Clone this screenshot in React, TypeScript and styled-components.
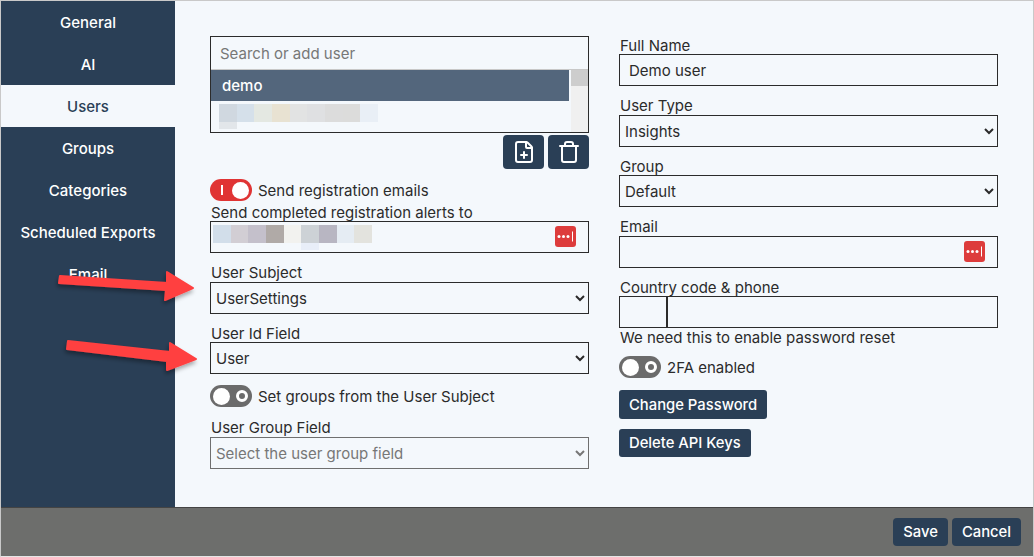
import React from "react";
import styled, { createGlobalStyle } from "styled-components";
import { FilePlus, Trash } from "lucide-react";

const GlobalStyle = createGlobalStyle`
  html, body { margin: 0; padding: 0; background: #f4f8fc; }
  * { box-sizing: border-box; }
  body { font-family: Inter, "Liberation Sans", sans-serif; font-size: 15px; color: #2b2b2b; }
`;

const navy = "#2a3f56";

const Page = styled.div`
  position: relative;
  width: 1034px;
  height: 557px;
  display: flex;
  flex-direction: column;
  border: 1px solid #c9c9c9;
  border-bottom-color: #e6e6e6;
  overflow: hidden;
`;

const Body = styled.div`
  flex: 1;
  display: flex;
  min-height: 0;
`;

const Sidebar = styled.nav`
  width: 174px;
  background: ${navy};
`;

const NavItem = styled.div<{ $active?: boolean }>`
  height: 42px;
  display: flex;
  align-items: center;
  justify-content: center;
  font-weight: 500;
  color: ${p => (p.$active ? "#2a3f56" : "#fff")};
  background: ${p => (p.$active ? "#f4f8fc" : "transparent")};
`;

const Main = styled.main`
  flex: 1;
  display: flex;
  gap: 30px;
  padding: 35px 0 0 35px;
  background: #f4f8fc;
`;

const Column = styled.div`
  width: 379px;
  display: flex;
  flex-direction: column;
`;

const Field = styled.div<{ $top?: number }>`
  margin-top: ${p => p.$top ?? 0}px;
  display: flex;
  flex-direction: column;
`;

const Label = styled.label<{ $gap?: number }>`
  height: 18px;
  margin-bottom: ${p => p.$gap ?? 0}px;
  padding-left: 1px;
  line-height: 20px;
  white-space: nowrap;
`;

const ListBox = styled.div`
  height: 97px;
  border: 1px solid #2b2b2b;
  display: flex;
  flex-direction: column;
`;

const Search = styled.input`
  height: 33px;
  flex: none;
  border: 0;
  border-bottom: 1px solid #c8c8c8;
  outline: 0;
  background: #f4f8fc;
  padding: 0 9px;
  font: inherit;
  &::placeholder { color: #777; opacity: 1; }
`;

const ListArea = styled.div`
  flex: 1;
  display: flex;
  min-height: 0;
`;

const ListRows = styled.div`
  flex: 1;
`;

const ListRow = styled.div`
  height: 31px;
  line-height: 31px;
  padding-left: 11px;
  background: #53667c;
  color: #fff;
  font-weight: 500;
`;

const ScrollTrack = styled.div`
  width: 17px;
  margin-left: 2px;
  background: #f0f0f0;
`;

const ScrollThumb = styled.div`
  height: 16px;
  background: #cdcdcd;
`;

const Mosaic = styled.div<{ $left: number; $top: number }>`
  position: absolute;
  left: ${p => p.$left}px;
  top: ${p => p.$top}px;
  display: grid;
  grid-auto-flow: column;
  grid-template-rows: 18px 7px;
  grid-auto-columns: 17.67px;
`;

const Cell = styled.div<{ $c?: string; $row?: number }>`
  grid-row: ${p => p.$row ?? 1};
  background: ${p => p.$c ?? "transparent"};
`;

const ButtonRow = styled.div`
  margin-top: 2px;
  display: flex;
  justify-content: flex-end;
  gap: 4px;
`;

const IconButton = styled.button`
  width: 41px;
  height: 34px;
  display: flex;
  align-items: center;
  justify-content: center;
  padding: 0;
  border: 0;
  border-radius: 4px;
  background: ${navy};
  color: #fff;
`;

const ToggleRow = styled.div<{ $top: number }>`
  margin-top: ${p => p.$top}px;
  height: 22px;
  display: flex;
  align-items: center;
  gap: 6px;
`;

const ToggleText = styled.span`
  padding-top: 1px;
`;

const Track = styled.div<{ $on?: boolean }>`
  width: 42px;
  height: 22px;
  border-radius: 11px;
  flex: none;
  display: flex;
  align-items: center;
  justify-content: space-between;
  flex-direction: ${p => (p.$on ? "row" : "row-reverse")};
  padding: 0 3px 0 ${p => (p.$on ? 11 : 3)}px;
  background: ${p => (p.$on ? "#e03434" : "#6b6b6b")};
`;

const Knob = styled.div`
  width: 17px;
  height: 17px;
  border-radius: 50%;
  background: #fff;
`;

const OnMark = styled.div`
  width: 2px;
  height: 10px;
  background: #fff;
`;

const OffMark = styled.div`
  width: 12px;
  height: 12px;
  margin-right: 1px;
  border-radius: 50%;
  border: 3px solid #fff;
  background: #6b6b6b;
`;

const InputWrap = styled.div`
  position: relative;
  display: flex;
`;

const TextInput = styled.input`
  width: 100%;
  height: 32px;
  border: 1px solid #2b2b2b;
  border-radius: 0;
  outline: 0;
  background: #f4f8fc;
  padding: 0 9px;
  font: inherit;
  color: #2b2b2b;
`;

const CodeInput = styled(TextInput)`
  width: 49px;
  flex: none;
  border-right-width: 2px;
`;

const PhoneInput = styled(TextInput)`
  flex: 1;
  border-left: 0;
`;

const Select = styled.select<{ $muted?: boolean }>`
  width: 100%;
  height: 32px;
  border: 1px solid ${p => (p.$muted ? "#6f6f6f" : "#2b2b2b")};
  border-radius: 0;
  outline: 0;
  background: #f4f8fc;
  padding: 0 0 0 1px;
  font: inherit;
  color: ${p => (p.$muted ? "#777" : "#2b2b2b")};
`;

const KeyBadge = styled.svg`
  position: absolute;
  right: 13px;
  top: 5px;
`;

const Hint = styled.div`
  margin-top: 1px;
  padding-left: 1px;
  height: 18px;
  line-height: 18px;
`;

const ActionButton = styled.button<{ $top: number; $h: number }>`
  align-self: flex-start;
  margin-top: ${p => p.$top}px;
  height: ${p => p.$h}px;
  padding: 0 10px;
  border: 0;
  border-radius: 3px;
  background: ${navy};
  color: #fff;
  font: inherit;
  font-size: 14.8px;
  font-weight: 500;
`;

const Footer = styled.footer`
  height: 49px;
  flex: none;
  display: flex;
  align-items: center;
  justify-content: flex-end;
  gap: 4px;
  padding-right: 12px;
  padding-bottom: 1px;
  background: #6d6e6c;
  border-top: 1px solid #444;
`;

const FooterButton = styled.button`
  height: 28px;
  padding: 0 10px;
  border: 0;
  border-radius: 4px;
  background: ${navy};
  color: #fff;
  font: inherit;
  font-size: 14.8px;
  font-weight: 500;
`;

const Arrows = styled.svg`
  position: absolute;
  left: 0;
  top: 0;
  pointer-events: none;
`;

const userCells = ["#d0d8e0", "#d5e0ea", "#e4e8e2", "#e8e2d2", "#e2e3e3", "#dfe0e2", "#dcdcdc", "#dcdcdb", "#e9eff6"];
const alertCells = ["#d2deea", "#d2ced4", "#c4c0cb", "#b0aaa7", "#f2f2ef", "#cdd2d6", "#b8b6c2", "#e5ecf3", "#e3e3de"];

const Toggle = ({ on }: { on?: boolean }) => (
  <Track $on={on}>
    {on ? <OnMark /> : <OffMark />}
    <Knob />
  </Track>
);

const Key = () => (
  <KeyBadge width="21" height="21" viewBox="0 0 21 21">
    <rect width="21" height="21" rx="3" fill="#dd3c3c" />
    <circle cx="4" cy="10.5" r="1.5" fill="#fff" />
    <circle cx="8.5" cy="10.5" r="1.5" fill="#fff" />
    <circle cx="13" cy="10.5" r="1.5" fill="#fff" />
    <rect x="17" y="5.5" width="1" height="10" fill="#fff" />
  </KeyBadge>
);

const Arrow = ({ points }: { points: string }) => (
  <polygon points={points} fill="#ff4040" stroke="#ff4040" strokeWidth="2" strokeLinejoin="round" filter="url(#arrowShadow)" />
);

export default function App(): JSX.Element {
  return (
    <Page>
      <GlobalStyle />
      <Body>
        <Sidebar>
          <NavItem>General</NavItem>
          <NavItem>AI</NavItem>
          <NavItem $active>Users</NavItem>
          <NavItem>Groups</NavItem>
          <NavItem>Categories</NavItem>
          <NavItem>Scheduled Exports</NavItem>
          <NavItem>Email</NavItem>
        </Sidebar>
        <Main>
          <Column>
            <ListBox>
              <Search placeholder="Search or add user" />
              <ListArea>
                <ListRows>
                  <ListRow>demo</ListRow>
                </ListRows>
                <ScrollTrack>
                  <ScrollThumb />
                </ScrollTrack>
              </ListArea>
            </ListBox>
            <ButtonRow>
              <IconButton><FilePlus size={24} strokeWidth={2} /></IconButton>
              <IconButton><Trash size={24} strokeWidth={2} /></IconButton>
            </ButtonRow>
            <ToggleRow $top={10}>
              <Toggle on />
              <ToggleText>Send registration emails</ToggleText>
            </ToggleRow>
            <Field $top={2}>
              <Label>Send completed registration alerts to</Label>
              <InputWrap>
                <TextInput />
                <Key />
              </InputWrap>
            </Field>
            <Field $top={10}>
              <Label $gap={1}>User Subject</Label>
              <Select defaultValue="UserSettings"><option>UserSettings</option></Select>
            </Field>
            <Field $top={10}>
              <Label>User Id Field</Label>
              <Select defaultValue="User"><option>User</option></Select>
            </Field>
            <ToggleRow $top={11}>
              <Toggle />
              <ToggleText>Set groups from the User Subject</ToggleText>
            </ToggleRow>
            <Field $top={11}>
              <Label $gap={1}>User Group Field</Label>
              <Select $muted defaultValue="Select the user group field"><option>Select the user group field</option></Select>
            </Field>
          </Column>
          <Column>
            <Field>
              <Label>Full Name</Label>
              <TextInput defaultValue="Demo user" />
            </Field>
            <Field $top={10}>
              <Label $gap={1}>User Type</Label>
              <Select defaultValue="Insights"><option>Insights</option></Select>
            </Field>
            <Field $top={10}>
              <Label>Group</Label>
              <Select defaultValue="Default"><option>Default</option></Select>
            </Field>
            <Field $top={10}>
              <Label $gap={1}>Email</Label>
              <InputWrap>
                <TextInput />
                <Key />
              </InputWrap>
            </Field>
            <Field $top={10}>
              <Label>Country code &amp; phone</Label>
              <InputWrap>
                <CodeInput />
                <PhoneInput />
              </InputWrap>
            </Field>
            <Hint>We need this to enable password reset</Hint>
            <ToggleRow $top={9}>
              <Toggle />
              <ToggleText>2FA enabled</ToggleText>
            </ToggleRow>
            <ActionButton $top={12} $h={29}>Change Password</ActionButton>
            <ActionButton $top={10} $h={28}>Delete API Keys</ActionButton>
          </Column>
        </Main>
      </Body>
      <Footer>
        <FooterButton>Save</FooterButton>
        <FooterButton>Cancel</FooterButton>
      </Footer>
      <Mosaic $left={218} $top={103}>
        {userCells.map(c => <Cell key={c} $c={c} />)}
        <Cell $c="#e2e6ea" $row={2} style={{ gridColumn: 1 }} />
      </Mosaic>
      <Mosaic $left={212} $top={224}>
        {alertCells.map(c => <Cell key={c} $c={c} />)}
        <Cell $c="#e8eef8" $row={2} style={{ gridColumn: 6 }} />
      </Mosaic>
      <Arrows width="1034" height="557" viewBox="0 0 1034 557">
        <defs>
          <filter id="arrowShadow" x="-20%" y="-50%" width="140%" height="200%">
            <feDropShadow dx="-1" dy="3" stdDeviation="2" floodColor="#000" floodOpacity="0.35" />
          </filter>
        </defs>
        <g transform="translate(-1 -1)">
          <Arrow points="60,276 167,283 167,272 193,288 165,300 166,290 59,283" />
          <Arrow points="68,341 170,352 170,343 196,359 167,370 167,361 67,349" />
        </g>
      </Arrows>
    </Page>
  );
}
